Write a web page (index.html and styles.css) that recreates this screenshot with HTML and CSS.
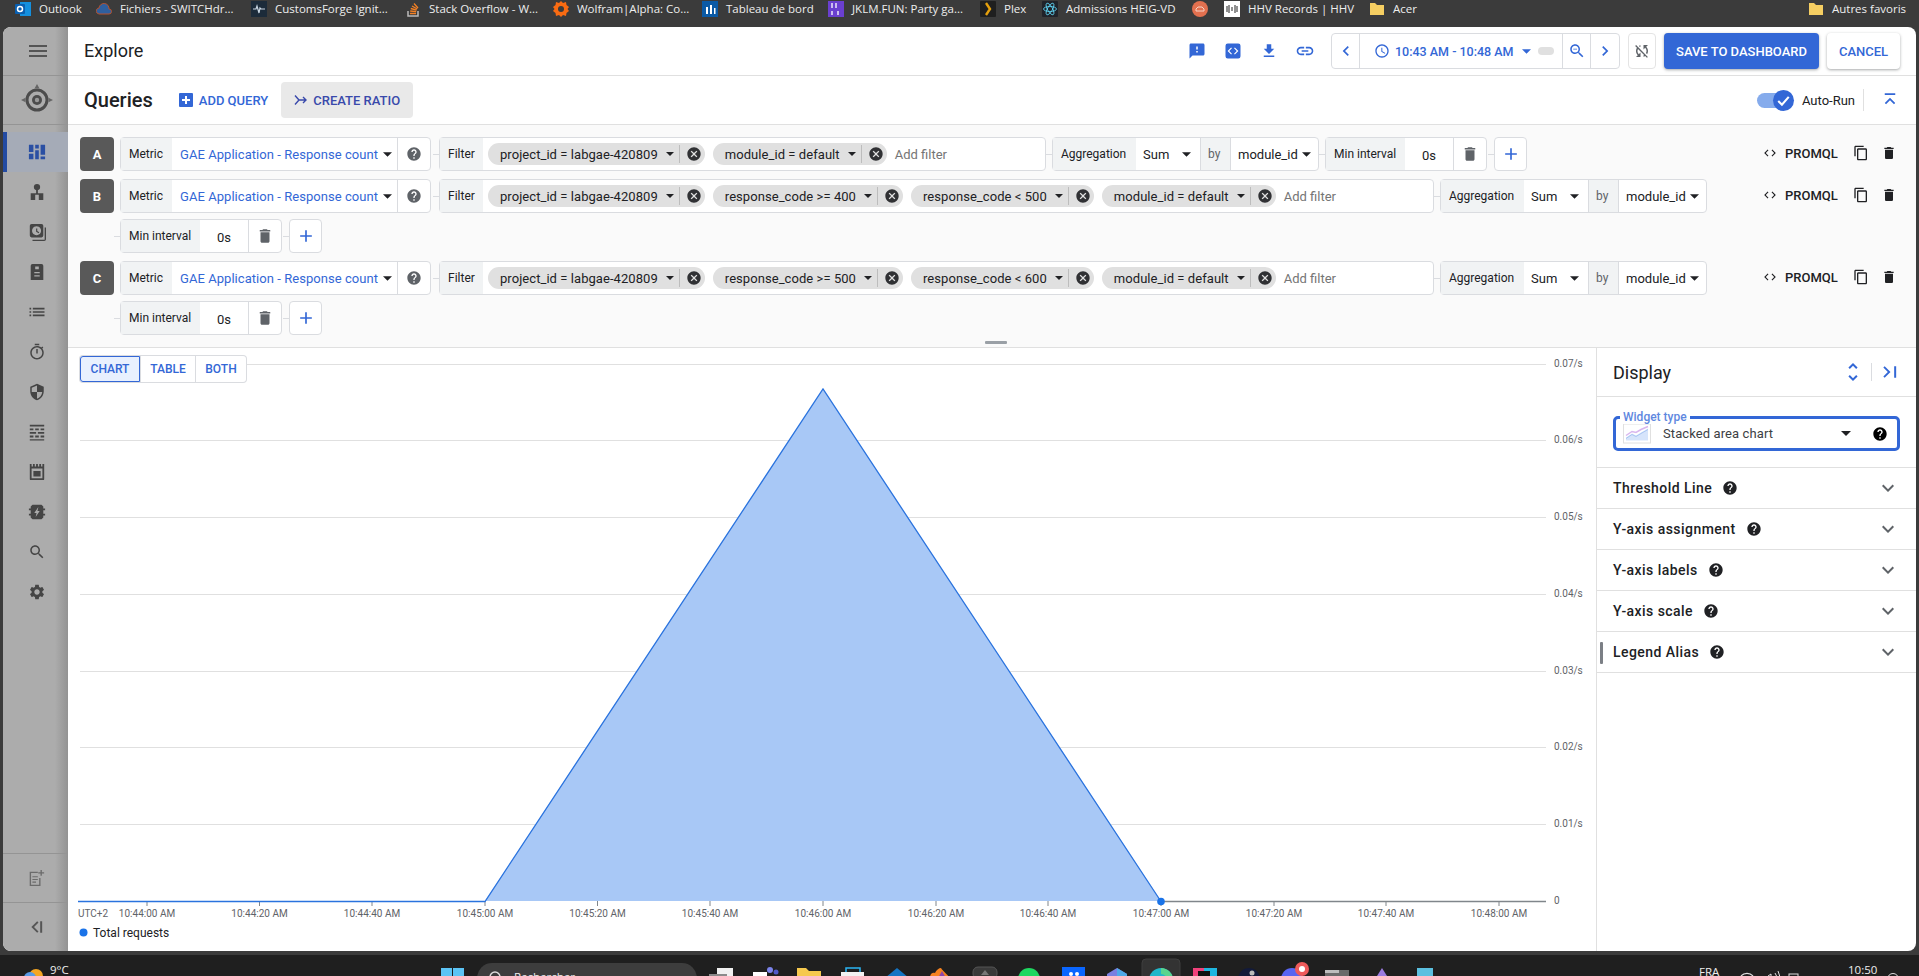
FILE: index.html
```html
<!DOCTYPE html>
<html lang="en">
<head>
<meta charset="utf-8">
<title>Explore</title>
<link rel="stylesheet" href="styles.css">
</head>
<body>
<svg class="sprite" aria-hidden="true">
  <symbol id="i-menu" viewBox="0 0 24 24"><path d="M3 18h18v-2H3v2zm0-5h18v-2H3v2zm0-7v2h18V6H3z"/></symbol>
  <symbol id="i-help" viewBox="0 0 24 24"><path d="M12 2C6.48 2 2 6.48 2 12s4.48 10 10 10 10-4.48 10-10S17.52 2 12 2zm1 17h-2v-2h2v2zm2.07-7.75l-.9.92C13.45 12.9 13 13.5 13 15h-2v-.5c0-1.1.45-2.1 1.17-2.83l1.24-1.26c.37-.36.59-.86.59-1.41 0-1.1-.9-2-2-2s-2 .9-2 2H8c0-2.21 1.79-4 4-4s4 1.79 4 4c0 .88-.36 1.68-.93 2.25z"/></symbol>
  <symbol id="i-cancel" viewBox="0 0 24 24"><path d="M12 2C6.47 2 2 6.47 2 12s4.47 10 10 10 10-4.47 10-10S17.53 2 12 2zm5 13.59L15.59 17 12 13.41 8.41 17 7 15.59 10.59 12 7 8.41 8.41 7 12 10.59 15.59 7 17 8.41 13.41 12 17 15.59z"/></symbol>
  <symbol id="i-delete" viewBox="0 0 24 24"><path d="M6 19c0 1.1.9 2 2 2h8c1.1 0 2-.9 2-2V7H6v12zM19 4h-3.5l-1-1h-5l-1 1H5v2h14V4z"/></symbol>
  <symbol id="i-add" viewBox="0 0 24 24"><path d="M19 13h-6v6h-2v-6H5v-2h6V5h2v6h6v2z"/></symbol>
  <symbol id="i-copy" viewBox="0 0 24 24"><path d="M16 1H4c-1.1 0-2 .9-2 2v14h2V3h12V1zm3 4H8c-1.1 0-2 .9-2 2v14c0 1.1.9 2 2 2h11c1.1 0 2-.9 2-2V7c0-1.1-.9-2-2-2zm0 16H8V7h11v14z"/></symbol>
  <symbol id="i-code" viewBox="0 0 24 24"><path d="M9.4 16.6L4.8 12l4.6-4.6L8 6l-6 6 6 6 1.4-1.4zm5.2 0l4.6-4.6-4.6-4.6L16 6l6 6-6 6-1.4-1.4z"/></symbol>
  <symbol id="i-feedback" viewBox="0 0 24 24"><path d="M20 2H4c-1.1 0-1.99.9-1.99 2L2 22l4-4h14c1.1 0 2-.9 2-2V4c0-1.1-.9-2-2-2zm-7 12h-2v-2h2v2zm0-4h-2V6h2v4z"/></symbol>
  <symbol id="i-codebox" viewBox="0 0 24 24"><path fill-rule="evenodd" d="M5 2h14a3 3 0 0 1 3 3v14a3 3 0 0 1-3 3H5a3 3 0 0 1-3-3V5a3 3 0 0 1 3-3zm5.6 13.6L7 12l3.600-3.600L9.500 7.300 4.800 12l4.700 4.700zm2.800 0l1.100 1.100 4.700-4.700-4.700-4.700-1.100 1.100L17 12z"/></symbol>
  <symbol id="i-download" viewBox="0 0 24 24"><path d="M19 9h-4V3H9v6H5l7 7 7-7zM5 18v2h14v-2H5z"/></symbol>
  <symbol id="i-link" viewBox="0 0 24 24"><path d="M3.900 12c0-1.710 1.390-3.100 3.100-3.100h4V7H7c-2.760 0-5 2.240-5 5s2.240 5 5 5h4v-1.900H7c-1.710 0-3.100-1.390-3.100-3.100zM8 13h8v-2H8v2zm9-6h-4v1.900h4c1.710 0 3.100 1.390 3.100 3.100s-1.390 3.100-3.100 3.100h-4V17h4c2.760 0 5-2.240 5-5s-2.240-5-5-5z"/></symbol>
  <symbol id="i-left" viewBox="0 0 24 24"><path d="M15.410 7.410L14 6l-6 6 6 6 1.410-1.410L10.830 12z"/></symbol>
  <symbol id="i-right" viewBox="0 0 24 24"><path d="M10 6L8.590 7.410 13.170 12l-4.580 4.590L10 18l6-6z"/></symbol>
  <symbol id="i-time" viewBox="0 0 24 24"><path d="M11.990 2C6.470 2 2 6.480 2 12s4.470 10 9.990 10C17.520 22 22 17.520 22 12S17.520 2 11.990 2zM12 20c-4.420 0-8-3.580-8-8s3.580-8 8-8 8 3.580 8 8-3.580 8-8 8zm.5-13H11v6l5.250 3.150.75-1.230-4.500-2.670z"/></symbol>
  <symbol id="i-search" viewBox="0 0 24 24"><path d="M15.500 14h-.79l-.28-.27C15.410 12.590 16 11.110 16 9.500 16 5.910 13.090 3 9.500 3S3 5.910 3 9.500 5.910 16 9.500 16c1.610 0 3.090-.59 4.230-1.570l.27.28v.79l5 4.990L20.490 19l-4.990-5zm-6 0C7.010 14 5 11.990 5 9.500S7.010 5 9.500 5 14 7.010 14 9.500 11.990 14 9.500 14z"/></symbol>
  <symbol id="i-zoomout" viewBox="0 0 24 24"><path d="M15.500 14h-.79l-.28-.27C15.410 12.590 16 11.110 16 9.500 16 5.910 13.090 3 9.500 3S3 5.910 3 9.500 5.910 16 9.500 16c1.610 0 3.090-.59 4.230-1.570l.27.28v.79l5 4.990L20.490 19l-4.990-5zm-6 0C7.010 14 5 11.990 5 9.500S7.010 5 9.500 5 14 7.010 14 9.500 11.990 14 9.500 14zM7 9h5v1H7z"/></symbol>
  <symbol id="i-sync" viewBox="0 0 24 24"><path d="M10 6.350V4.260c-.8.210-1.550.54-2.230.96l1.460 1.460c.25-.12.5-.24.77-.33zm-7.140-.94l2.360 2.360C4.450 8.990 4 10.440 4 12c0 2.210.91 4.200 2.360 5.640L4 20h6v-6l-2.240 2.240C6.680 15.150 6 13.660 6 12c0-1 .25-1.940.68-2.770l8.080 8.080c-.25.13-.5.25-.77.34v2.090c.8-.21 1.550-.54 2.230-.96l2.360 2.360 1.270-1.270L4.140 4.140 2.860 5.410zM20 4h-6v6l2.240-2.240C17.320 8.850 18 10.340 18 12c0 1-.25 1.940-.68 2.770l1.460 1.460C19.550 15.010 20 13.560 20 12c0-2.210-.91-4.200-2.360-5.640L20 4z"/></symbol>
  <symbol id="i-more" viewBox="0 0 24 24"><path d="M16.590 8.590L12 13.170 7.410 8.590 6 10l6 6 6-6z"/></symbol>
  <symbol id="i-unfold" viewBox="0 0 24 24"><path d="M12 5.830L15.170 9l1.410-1.410L12 3 7.410 7.590 8.830 9 12 5.830zm0 12.340L8.830 15l-1.410 1.410L12 21l4.590-4.590L15.170 15 12 18.170z"/></symbol>
  <symbol id="i-caret" viewBox="0 0 10 5"><path d="M0 0l5 5 5-5z"/></symbol>
  <symbol id="i-collapse" viewBox="0 0 24 24"><path d="M5 3h14v2.400H5zM12 9l-7 7 1.700 1.700 5.300-5.300 5.300 5.300L19 16z"/></symbol>
  <symbol id="i-panelin" viewBox="0 0 24 24"><path d="M5.600 5L4 6.600 9.400 12 4 17.400 5.600 19l7-7zM17 5h2.400v14H17z"/></symbol>
  <symbol id="i-panelout" viewBox="0 0 24 24"><path d="M15 6.600L13.400 5l-7 7 7 7 1.600-1.600L9.600 12zM17 5h2.400v14H17z"/></symbol>
  <symbol id="i-dash" viewBox="0 0 20 20"><path d="M1 2h5v8H1zM1 12h5v6H1zM8 2h4v4H8zM8 8h4v10H8zM14 2h5v11h-5zM14 15h5v3h-5z"/></symbol>
  <symbol id="i-hub" viewBox="0 0 20 20"><circle cx="10" cy="4.500" r="3.500"/><path d="M9 7h2v4.500h6V19h-5v-6h-4v6H3v-7.500h6z"/></symbol>
  <symbol id="i-hist" viewBox="0 0 20 20"><path fill-rule="evenodd" d="M4 1h11a2 2 0 0 1 2 2v11a2 2 0 0 1-2 2H4a2 2 0 0 1-2-2V3a2 2 0 0 1 2-2zm5.500 2.500a5 5 0 1 0 .01 0zM9 6h1.300v3l2.200 1.300-.6 1L9 9.700z"/><path d="M18.500 5H20v13a2 2 0 0 1-2 2H5v-1.500h13.500z"/></symbol>
  <symbol id="i-form" viewBox="0 0 20 20"><path fill-rule="evenodd" d="M5 1h10a2 2 0 0 1 2 2v16H3V3a2 2 0 0 1 2-2zm2 9v1.500h6V10zm0 3.500V15h6v-1.500zM8 4v3h4V4z"/></symbol>
  <symbol id="i-list" viewBox="0 0 24 24"><path d="M3 13h2v-2H3v2zm0 4h2v-2H3v2zm0-8h2V7H3v2zm4 4h14v-2H7v2zm0 4h14v-2H7v2zM7 7v2h14V7H7z"/></symbol>
  <symbol id="i-timer" viewBox="0 0 24 24"><path d="M15 1H9v2h6V1zm-4 13h2V8h-2v6zm8.030-6.610l1.420-1.420c-.43-.51-.9-.99-1.410-1.410l-1.420 1.420C16.070 4.740 14.120 4 12 4c-4.970 0-9 4.030-9 9s4.020 9 9 9 9-4.030 9-9c0-2.120-.74-4.070-1.970-5.610zM12 20c-3.870 0-7-3.130-7-7s3.130-7 7-7 7 3.130 7 7-3.130 7-7 7z"/></symbol>
  <symbol id="i-shield" viewBox="0 0 24 24"><path d="M12 1L3 5v6c0 5.550 3.840 10.740 9 12 5.160-1.260 9-6.450 9-12V5l-9-4zm0 10.990h7c-.53 4.120-3.280 7.790-7 8.940V12H5V6.300l7-3.110v8.800z"/></symbol>
  <symbol id="i-brick" viewBox="0 0 20 20"><path d="M2 2h16v2H2zM2 6h4v2H2zM8 6h4v2H8zM14 6h4v2h-4zM2 10h7v2H2zM11 10h7v2h-7zM2 14h4v2H2zM8 14h4v2H8zM14 14h4v2h-4zM2 18h16v1.500H2z"/></symbol>
  <symbol id="i-card" viewBox="0 0 20 20"><path fill-rule="evenodd" d="M2 1h2v3h1.500V1h2v3H9V1h2v3h1.500V1h2v3H16V1h2v17a1 1 0 0 1-1 1H3a1 1 0 0 1-1-1zm2 5v11h12V6zm2 3h8v6H6z"/></symbol>
  <symbol id="i-chip" viewBox="0 0 20 20"><path fill-rule="evenodd" d="M5 2h10l2 2v2h2v2h-2v4h2v2h-2v2l-2 2H5l-2-2v-2H1v-2h2V8H1V6h2V4zm6.500 2.500L7 11h2.500l-1 4.500L13 9h-2.500z"/></symbol>
  <symbol id="i-settings" viewBox="0 0 24 24"><path d="M19.140 12.940c.04-.3.06-.61.06-.94 0-.32-.02-.64-.07-.94l2.030-1.580c.18-.14.23-.41.12-.61l-1.920-3.320c-.12-.22-.37-.29-.59-.22l-2.390.96c-.5-.38-1.030-.7-1.620-.94l-.36-2.540c-.04-.24-.24-.41-.48-.41h-3.840c-.24 0-.43.17-.47.41l-.36 2.540c-.59.24-1.130.57-1.620.94l-2.390-.96c-.22-.08-.47 0-.59.22L2.740 8.870c-.12.21-.08.47.12.61l2.030 1.580c-.05.3-.09.63-.09.94s.02.64.07.94l-2.030 1.580c-.18.14-.23.41-.12.61l1.920 3.320c.12.22.37.29.59.22l2.390-.96c.5.38 1.030.7 1.620.94l.36 2.540c.05.24.24.41.48.41h3.840c.24 0 .44-.17.47-.41l.36-2.540c.59-.24 1.130-.56 1.620-.94l2.390.96c.22.08.47 0 .59-.22l1.920-3.320c.12-.22.07-.47-.12-.61l-2.010-1.580zM12 15.600c-1.980 0-3.600-1.620-3.600-3.600s1.620-3.600 3.600-3.600 3.600 1.620 3.600 3.600-1.620 3.600-3.600 3.600z"/></symbol>
  <symbol id="i-note" viewBox="0 0 20 20"><path fill-rule="evenodd" d="M3 3h9v1.500H4.500v13h9V10H15v9H3zM6 8h6v1.300H6zM6 11h6v1.300H6zM6 14h4v1.300H6zM15 1h1.500v2.500H19V5h-2.500v2.500H15V5h-2.500V3.500H15z"/></symbol>
</svg>

<header class="bookmarks">
  <div class="bm"><svg class="bm-icon" viewBox="0 0 16 16"><rect x="5" y="1" width="11" height="14" fill="#1490df"/><rect y="3" width="10" height="10" rx="1" fill="#0a5fb0"/><circle cx="5" cy="8" r="2.500" fill="none" stroke="#fff" stroke-width="1.500"/></svg><span>Outlook</span></div>
  <div class="bm"><svg class="bm-icon" viewBox="0 0 16 16"><path d="M1 12a3 3 0 0 1 2-5 5 5 0 0 1 10 1 2.500 2.500 0 0 1 0 5H3z" fill="#2f5f9e" stroke="#b7532e"/></svg><span>Fichiers - SWITCHdr...</span></div>
  <div class="bm"><svg class="bm-icon" viewBox="0 0 16 16"><rect width="16" height="16" fill="#1c2b3a"/><path d="M2 8h3l1-3 2 7 1-5 1 1h4" fill="none" stroke="#c9d6e2" stroke-width="1.200"/></svg><span>CustomsForge Ignit...</span></div>
  <div class="bm"><svg class="bm-icon" viewBox="0 0 16 16"><path d="M3 10v5h10v-5" fill="none" stroke="#bcbbbb" stroke-width="1.500"/><path d="M5 12.500h6M5.200 10l6 .6M5.800 7.500l5.800 1.600M7 5l5.200 3M9 2.500l4 4.500" stroke="#f48024" stroke-width="1.300"/></svg><span>Stack Overflow - W...</span></div>
  <div class="bm"><svg class="bm-icon" viewBox="0 0 16 16"><path d="M8 0l2 2 3-1 .5 3 2.500 2-1.500 2 1.500 2-2.500 2-.5 3-3-1-2 2-2-2-3 1-.5-3L0 10l1.500-2L0 6l2.500-2L3 1l3 1z" fill="#f96b12"/><circle cx="8" cy="8" r="3" fill="#3b3b3b"/></svg><span>Wolfram|Alpha: Co...</span></div>
  <div class="bm"><svg class="bm-icon" viewBox="0 0 16 16"><rect width="16" height="16" fill="#0b5aa5"/><path d="M4 13V6h2v7zm4 0V4h2v9zm4 0V7h1.500v6z" fill="#fff"/></svg><span>Tableau de bord</span></div>
  <div class="bm"><svg class="bm-icon" viewBox="0 0 16 16"><rect width="16" height="16" fill="#6a3fd0"/><path d="M4 2v5M8 2v5M4 10v4M10 10v4" stroke="#fff" stroke-width="1.300"/></svg><span>JKLM.FUN: Party ga...</span></div>
  <div class="bm"><svg class="bm-icon" viewBox="0 0 16 16"><rect width="16" height="16" rx="1" fill="#1f1f1f"/><path d="M6 2l4 6-4 6" fill="none" stroke="#e5a00d" stroke-width="2.400"/></svg><span>Plex</span></div>
  <div class="bm"><svg class="bm-icon" viewBox="0 0 16 16"><rect width="16" height="16" rx="1" fill="#20232a"/><g fill="none" stroke="#61dafb" stroke-width=".8"><ellipse cx="8" cy="8" rx="6.500" ry="2.500"/><ellipse cx="8" cy="8" rx="6.500" ry="2.500" transform="rotate(60 8 8)"/><ellipse cx="8" cy="8" rx="6.500" ry="2.500" transform="rotate(120 8 8)"/></g></svg><span>Admissions HEIG-VD</span></div>
  <div class="bm"><svg class="bm-icon" viewBox="0 0 16 16"><circle cx="8" cy="8" r="8" fill="#e2704f"/><path d="M4 10h8V8l-2-2H6L4 8z" fill="none" stroke="#f6d3c7"/></svg></div>
  <div class="bm"><svg class="bm-icon" viewBox="0 0 16 16"><rect width="16" height="16" fill="#fff"/><path d="M3 5v6M5 4v8M8 6v4M11 4v8M13 5v6" stroke="#222" stroke-width="1"/></svg><span>HHV Records | HHV</span></div>
  <div class="bm"><svg class="bm-icon" viewBox="0 0 16 16"><path d="M1 2h5l2 2h7v10H1z" fill="#f5ce62"/></svg><span>Acer</span></div>
  <div class="bm bm-other"><svg class="bm-icon" viewBox="0 0 16 16"><path d="M1 2h5l2 2h7v10H1z" fill="#f5ce62"/></svg><span>Autres favoris</span></div>
</header>

<div class="window">
  <nav class="sidebar">
    <div class="side-cell side-menu"><svg class="ic ic-24"><use href="#i-menu"/></svg></div>
    <div class="side-cell side-logo">
      <svg class="logo" viewBox="0 0 36 36"><circle cx="18" cy="18" r="10" fill="none" stroke="#4c4c4c" stroke-width="3"/><circle cx="18" cy="18" r="5" fill="#4c4c4c"/><circle cx="18" cy="18" r="2.200" fill="#999"/><path d="M18 2l2.500 4.500h-5zM2 18l4.500-2.200v4.400zM34 18l-4.500-2.200v4.400z" fill="#666"/></svg>
    </div>
    <ul class="side-nav">
      <li class="side-item active"><svg class="ic ic-18"><use href="#i-dash"/></svg></li>
      <li class="side-item"><svg class="ic ic-18"><use href="#i-hub"/></svg></li>
      <li class="side-item"><svg class="ic ic-18"><use href="#i-hist"/></svg></li>
      <li class="side-item"><svg class="ic ic-18"><use href="#i-form"/></svg></li>
      <li class="side-item"><svg class="ic ic-20"><use href="#i-list"/></svg></li>
      <li class="side-item"><svg class="ic ic-18"><use href="#i-timer"/></svg></li>
      <li class="side-item"><svg class="ic ic-18"><use href="#i-shield"/></svg></li>
      <li class="side-item"><svg class="ic ic-18"><use href="#i-brick"/></svg></li>
      <li class="side-item"><svg class="ic ic-18"><use href="#i-card"/></svg></li>
      <li class="side-item"><svg class="ic ic-18"><use href="#i-chip"/></svg></li>
      <li class="side-item"><svg class="ic ic-18"><use href="#i-search"/></svg></li>
      <li class="side-item"><svg class="ic ic-18"><use href="#i-settings"/></svg></li>
    </ul>
    <div class="side-cell side-bottom side-note"><svg class="ic ic-18"><use href="#i-note"/></svg></div>
    <div class="side-cell side-bottom"><svg class="ic ic-20"><use href="#i-panelout"/></svg></div>
  </nav>

  <main class="main">
    <div class="topbar">
      <h1 class="page-title">Explore</h1>
      <div class="toolbar">
        <span class="tool"><svg class="ic ic-18"><use href="#i-feedback"/></svg></span>
        <span class="tool"><svg class="ic ic-18"><use href="#i-codebox"/></svg></span>
        <span class="tool"><svg class="ic ic-18"><use href="#i-download"/></svg></span>
        <span class="tool"><svg class="ic ic-20"><use href="#i-link"/></svg></span>
        <div class="timegroup">
          <span class="tg-btn"><svg class="ic ic-20"><use href="#i-left"/></svg></span>
          <span class="tg-range">
            <svg class="ic ic-16"><use href="#i-time"/></svg>
            <span class="tg-text">10:43 AM - 10:48 AM</span>
            <svg class="caret"><use href="#i-caret"/></svg>
            <span class="tg-pill"></span>
          </span>
          <span class="tg-btn"><svg class="ic ic-18"><use href="#i-zoomout"/></svg></span>
          <span class="tg-btn tg-last"><svg class="ic ic-20"><use href="#i-right"/></svg></span>
        </div>
        <span class="sync-btn"><svg class="ic ic-18"><use href="#i-sync"/></svg></span>
        <button class="btn-save">SAVE TO DASHBOARD</button>
        <button class="btn-cancel">CANCEL</button>
      </div>
    </div>

    <div class="query-head">
      <h2 class="query-title">Queries</h2>
      <span class="add-query"><svg class="add-box" viewBox="0 0 14 14"><rect width="14" height="14" rx="1" fill="#3367d6"/><path d="M6 3h2v3h3v2H8v3H6V8H3V6h3z" fill="#fff"/></svg>ADD QUERY</span>
      <span class="create-ratio"><svg class="ratio-icon" viewBox="0 0 14 12"><path d="M1 1.500L5 6h7M9 3l3 3-3 3M1 10.500L5 6" fill="none" stroke="#3949ab" stroke-width="1.400"/></svg>CREATE RATIO</span>
      <div class="auto-run">
        <span class="toggle"><span class="toggle-knob"><svg viewBox="0 0 20 20"><path d="M5 10.500l3.500 3.500L15 6.500" fill="none" stroke="#fff" stroke-width="2"/></svg></span></span>
        <span class="auto-label">Auto-Run</span>
        <span class="auto-sep"></span>
        <svg class="ic ic-18 blue"><use href="#i-collapse"/></svg>
      </div>
    </div>

    <section class="query-panel">
      <div class="query">
        <div class="letter">A</div>
        <div class="fields">
          <div class="box box-first metric"><span class="label">Metric</span><span class="metric-value">GAE Application - Response count<svg class="caret dark"><use href="#i-caret"/></svg></span><span class="help-cell"><svg class="ic ic-16 grey"><use href="#i-help"/></svg></span></div>
          <div class="box filter filter-short"><span class="label">Filter</span><span class="chips">
            <span class="chip">project_id = labgae-420809<svg class="caret chip-caret"><use href="#i-caret"/></svg><i class="chip-sep"></i><svg class="ic chip-x"><use href="#i-cancel"/></svg></span>
            <span class="chip">module_id = default<svg class="caret chip-caret"><use href="#i-caret"/></svg><i class="chip-sep"></i><svg class="ic chip-x"><use href="#i-cancel"/></svg></span>
            <span class="add-filter">Add filter</span></span></div>
          <div class="box agg"><span class="label">Aggregation</span><span class="val val-sum">Sum<svg class="caret dark"><use href="#i-caret"/></svg></span><span class="label label-by">by</span><span class="val val-mod">module_id<svg class="caret dark"><use href="#i-caret"/></svg></span></div>
          <div class="min-group"><div class="box mini"><span class="label">Min interval</span><span class="zero">0s</span><span class="trash"><svg class="ic ic-18 grey"><use href="#i-delete"/></svg></span></div><div class="box plus"><svg class="ic ic-20 blue"><use href="#i-add"/></svg></div></div>
        </div>
        <div class="actions"><svg class="ic ic-14"><use href="#i-code"/></svg><span class="promql">PROMQL</span><svg class="ic ic-16 act-copy"><use href="#i-copy"/></svg><svg class="ic ic-16 act-del"><use href="#i-delete"/></svg></div>
      </div>

      <div class="query">
        <div class="letter">B</div>
        <div class="fields">
          <div class="box box-first metric"><span class="label">Metric</span><span class="metric-value">GAE Application - Response count<svg class="caret dark"><use href="#i-caret"/></svg></span><span class="help-cell"><svg class="ic ic-16 grey"><use href="#i-help"/></svg></span></div>
          <div class="box filter filter-long"><span class="label">Filter</span><span class="chips">
            <span class="chip">project_id = labgae-420809<svg class="caret chip-caret"><use href="#i-caret"/></svg><i class="chip-sep"></i><svg class="ic chip-x"><use href="#i-cancel"/></svg></span>
            <span class="chip">response_code &gt;= 400<svg class="caret chip-caret"><use href="#i-caret"/></svg><i class="chip-sep"></i><svg class="ic chip-x"><use href="#i-cancel"/></svg></span>
            <span class="chip">response_code &lt; 500<svg class="caret chip-caret"><use href="#i-caret"/></svg><i class="chip-sep"></i><svg class="ic chip-x"><use href="#i-cancel"/></svg></span>
            <span class="chip">module_id = default<svg class="caret chip-caret"><use href="#i-caret"/></svg><i class="chip-sep"></i><svg class="ic chip-x"><use href="#i-cancel"/></svg></span>
            <span class="add-filter">Add filter</span></span></div>
          <div class="box agg"><span class="label">Aggregation</span><span class="val val-sum">Sum<svg class="caret dark"><use href="#i-caret"/></svg></span><span class="label label-by">by</span><span class="val val-mod">module_id<svg class="caret dark"><use href="#i-caret"/></svg></span></div>
          <div class="min-group"><div class="box mini"><span class="label">Min interval</span><span class="zero">0s</span><span class="trash"><svg class="ic ic-18 grey"><use href="#i-delete"/></svg></span></div><div class="box plus"><svg class="ic ic-20 blue"><use href="#i-add"/></svg></div></div>
        </div>
        <div class="actions"><svg class="ic ic-14"><use href="#i-code"/></svg><span class="promql">PROMQL</span><svg class="ic ic-16 act-copy"><use href="#i-copy"/></svg><svg class="ic ic-16 act-del"><use href="#i-delete"/></svg></div>
      </div>

      <div class="query">
        <div class="letter">C</div>
        <div class="fields">
          <div class="box box-first metric"><span class="label">Metric</span><span class="metric-value">GAE Application - Response count<svg class="caret dark"><use href="#i-caret"/></svg></span><span class="help-cell"><svg class="ic ic-16 grey"><use href="#i-help"/></svg></span></div>
          <div class="box filter filter-long"><span class="label">Filter</span><span class="chips">
            <span class="chip">project_id = labgae-420809<svg class="caret chip-caret"><use href="#i-caret"/></svg><i class="chip-sep"></i><svg class="ic chip-x"><use href="#i-cancel"/></svg></span>
            <span class="chip">response_code &gt;= 500<svg class="caret chip-caret"><use href="#i-caret"/></svg><i class="chip-sep"></i><svg class="ic chip-x"><use href="#i-cancel"/></svg></span>
            <span class="chip">response_code &lt; 600<svg class="caret chip-caret"><use href="#i-caret"/></svg><i class="chip-sep"></i><svg class="ic chip-x"><use href="#i-cancel"/></svg></span>
            <span class="chip">module_id = default<svg class="caret chip-caret"><use href="#i-caret"/></svg><i class="chip-sep"></i><svg class="ic chip-x"><use href="#i-cancel"/></svg></span>
            <span class="add-filter">Add filter</span></span></div>
          <div class="box agg"><span class="label">Aggregation</span><span class="val val-sum">Sum<svg class="caret dark"><use href="#i-caret"/></svg></span><span class="label label-by">by</span><span class="val val-mod">module_id<svg class="caret dark"><use href="#i-caret"/></svg></span></div>
          <div class="min-group"><div class="box mini"><span class="label">Min interval</span><span class="zero">0s</span><span class="trash"><svg class="ic ic-18 grey"><use href="#i-delete"/></svg></span></div><div class="box plus"><svg class="ic ic-20 blue"><use href="#i-add"/></svg></div></div>
        </div>
        <div class="actions"><svg class="ic ic-14"><use href="#i-code"/></svg><span class="promql">PROMQL</span><svg class="ic ic-16 act-copy"><use href="#i-copy"/></svg><svg class="ic ic-16 act-del"><use href="#i-delete"/></svg></div>
      </div>
      <span class="drag-handle"></span>
    </section>

    <div class="work">
      <section class="chart">
        <div class="tabs"><span class="tab tab-on">CHART</span><span class="tab">TABLE</span><span class="tab">BOTH</span></div>
        <svg class="plot" viewBox="68 348 1528 603" preserveAspectRatio="none">
          <g class="grid">
            <path d="M80 364.500H1546M80 440.500H1546M80 517.500H1546M80 594.500H1546M80 671.500H1546M80 747.500H1546M80 824.500H1546"/>
          </g>
          <g class="ticks">
            <path d="M147 901v5M259.500 901v5M372 901v5M485 901v5M597.500 901v5M710 901v5M823 901v5M936 901v5M1048 901v5M1161 901v5M1274 901v5M1386 901v5M1499 901v5"/>
          </g>
          <polygon class="area" points="485,901 823,389 1161,901"/>
          <path class="baseline" d="M1161 901.500H1546"/>
          <path class="series" d="M78 901.500H485L823 389L1161 901.500"/>
          <circle class="end-dot" cx="1161" cy="901.500" r="3.800"/>
          <g class="y-labels">
            <text x="1554" y="367">0.07/s</text>
            <text x="1554" y="443">0.06/s</text>
            <text x="1554" y="520">0.05/s</text>
            <text x="1554" y="597">0.04/s</text>
            <text x="1554" y="674">0.03/s</text>
            <text x="1554" y="750">0.02/s</text>
            <text x="1554" y="827">0.01/s</text>
            <text x="1554" y="904">0</text>
          </g>
          <g class="x-labels">
            <text class="utc" x="78" y="917">UTC+2</text>
            <text x="147" y="917">10:44:00 AM</text>
            <text x="259.500" y="917">10:44:20 AM</text>
            <text x="372" y="917">10:44:40 AM</text>
            <text x="485" y="917">10:45:00 AM</text>
            <text x="597.500" y="917">10:45:20 AM</text>
            <text x="710" y="917">10:45:40 AM</text>
            <text x="823" y="917">10:46:00 AM</text>
            <text x="936" y="917">10:46:20 AM</text>
            <text x="1048" y="917">10:46:40 AM</text>
            <text x="1161" y="917">10:47:00 AM</text>
            <text x="1274" y="917">10:47:20 AM</text>
            <text x="1386" y="917">10:47:40 AM</text>
            <text x="1499" y="917">10:48:00 AM</text>
          </g>
          <circle class="legend-dot" cx="83.500" cy="932.500" r="4"/>
          <text class="legend" x="93" y="937">Total requests</text>
        </svg>
      </section>

      <aside class="display">
        <div class="display-head">
          <span class="display-title">Display</span>
          <svg class="ic ic-24 blue"><use href="#i-unfold"/></svg>
          <span class="display-sep"></span>
          <svg class="ic ic-20 blue"><use href="#i-panelin"/></svg>
        </div>
        <div class="widget-wrap">
          <div class="widget">
            <span class="widget-label">Widget type</span>
            <svg class="thumb" viewBox="0 0 28 20"><rect x=".5" y=".5" width="27" height="19" fill="#fff" stroke="#e0e0e0"/><path d="M3 14l6-4 4 2 5-3 7-4v12H3z" fill="#d6e4fb"/><path d="M3 12l6-4 4 1 5-3 7-3" fill="none" stroke="#d9b6ee" stroke-width="1.500"/><path d="M3 15l6-4 4 2 5-3 7-4" fill="none" stroke="#a9c5f2"/></svg>
            <span class="widget-text">Stacked area chart</span>
            <svg class="caret dark widget-caret"><use href="#i-caret"/></svg>
            <svg class="ic ic-16 widget-help"><use href="#i-help"/></svg>
          </div>
        </div>
        <div class="option"><span>Threshold Line</span><svg class="ic ic-16"><use href="#i-help"/></svg><svg class="ic ic-24 chev"><use href="#i-more"/></svg></div>
        <div class="option"><span>Y-axis assignment</span><svg class="ic ic-16"><use href="#i-help"/></svg><svg class="ic ic-24 chev"><use href="#i-more"/></svg></div>
        <div class="option"><span>Y-axis labels</span><svg class="ic ic-16"><use href="#i-help"/></svg><svg class="ic ic-24 chev"><use href="#i-more"/></svg></div>
        <div class="option"><span>Y-axis scale</span><svg class="ic ic-16"><use href="#i-help"/></svg><svg class="ic ic-24 chev"><use href="#i-more"/></svg></div>
        <div class="option option-mark"><span>Legend Alias</span><svg class="ic ic-16"><use href="#i-help"/></svg><svg class="ic ic-24 chev"><use href="#i-more"/></svg></div>
      </aside>
    </div>
  </main>
</div>

<footer class="taskbar">
  <svg class="task-svg" viewBox="0 955 1919 21">
    <circle cx="36" cy="976" r="7" fill="#f5a623"/><circle cx="30" cy="978" r="6" fill="#5a9be6"/>
    <text class="tb-text" x="50" y="974">9°C</text>
    <path d="M441 968h11v8h-11zM453 968h11v8h-11z" fill="#5cc4f5"/>
    <rect x="477" y="963" width="220" height="30" rx="15" fill="#3d3d3d"/>
    <circle cx="495" cy="977" r="5" fill="none" stroke="#ddd" stroke-width="1.500"/>
    <text class="tb-text" x="514" y="981">Rechercher</text>
    <rect x="717" y="968" width="16" height="10" fill="#f0f0f0"/><rect x="709" y="974" width="18" height="4" fill="#8a8a8a"/>
    <rect x="753" y="972" width="14" height="6" fill="#fff"/><circle cx="770" cy="970" r="3" fill="#7b83eb"/><circle cx="776" cy="972" r="2.500" fill="#5059c9"/>
    <path d="M797 968h9l3 3h12v7h-24z" fill="#f6c94e"/>
    <path d="M846 972v-4h14v4" fill="none" stroke="#2bb5f3" stroke-width="1.500"/><rect x="841" y="972" width="23" height="6" fill="#f2f2f2"/>
    <path d="M885 978l12-10 12 10z" fill="#1475c4"/>
    <path d="M930 978c0-5 3-6 5-5 1-3 4-5 6-5 1 2 5 5 9 10z" fill="#f58220"/><path d="M938 978l4-7 4 7z" fill="#8e44ad"/>
    <rect x="973" y="967" width="24" height="12" rx="5" fill="#3a3a3a" stroke="#555"/><path d="M985 970l-4 5h8z" fill="#777"/>
    <circle cx="1029" cy="979" r="11" fill="#1ed760"/>
    <rect x="1062" y="967" width="23" height="12" fill="#0a66ff"/><circle cx="1071" cy="974" r="2" fill="#fff"/><circle cx="1077" cy="974" r="2" fill="#fff"/>
    <path d="M1117 968l10 6v4h-20v-4z" fill="#7a7fe0"/><path d="M1117 968l10 6v4h-10z" fill="#4fa9e8"/>
    <rect x="1142" y="959" width="38" height="30" rx="4" fill="#333" stroke="#3f3f3f"/>
    <circle cx="1161" cy="980" r="12" fill="#1fb6c9"/><path d="M1161 968a12 12 0 0 1 12 12h-6a6 6 0 0 0-6-6z" fill="#58d48f"/>
    <rect x="1193" y="968" width="24" height="10" fill="#f0417b"/><rect x="1204" y="968" width="13" height="10" fill="#1fb6e0"/><rect x="1198" y="971" width="12" height="7" fill="#111"/>
    <circle cx="1249" cy="979" r="11" fill="#121a3a"/><circle cx="1252" cy="973" r="2.500" fill="#bbb"/>
    <circle cx="1292" cy="979" r="11" fill="#5865f2"/><circle cx="1302" cy="969" r="7" fill="#ee5a5a"/><circle cx="1302" cy="969" r="3" fill="#fff"/>
    <rect x="1325" y="970" width="24" height="8" fill="#6a6a6a"/><rect x="1325" y="970" width="14" height="3" fill="#bdbdbd"/>
    <path d="M1382 968l5 8v2h-10v-2z" fill="#9b7be0"/>
    <rect x="1417" y="968" width="16" height="10" fill="#5bc0e0"/>
    <text class="tb-text" x="1699" y="976">FRA</text>
    <path d="M1741 976a8 8 0 0 1 12 0" fill="none" stroke="#ddd" stroke-width="1.200"/>
    <path d="M1768 976l3-2v4M1775 973l2 4M1778 971l2 6" fill="none" stroke="#ddd"/>
    <rect x="1789" y="974" width="9" height="5" fill="none" stroke="#ddd"/>
    <text class="tb-text" x="1848" y="974">10:50</text>
    <circle cx="1893" cy="979" r="5.500" fill="none" stroke="#ddd"/>
  </svg>
</footer>
</body>
</html>
```

FILE: styles.css
```css
* { box-sizing: border-box; }
html, body { margin: 0; height: 100%; }
body {
  width: 1919px;
  height: 976px;
  overflow: hidden;
  display: flex;
  flex-direction: column;
  background: #3b3b3b;
  font-family: Roboto, "Liberation Sans", sans-serif;
  color: #202124;
}
h1, h2, ul { margin: 0; padding: 0; font-weight: 400; }
ul { list-style: none; }
button { font-family: inherit; cursor: pointer; }
.sprite { position: absolute; width: 0; height: 0; }

.ic { display: block; fill: currentColor; flex: none; }
.ic-14 { width: 14px; height: 14px; }
.ic-16 { width: 16px; height: 16px; }
.ic-18 { width: 18px; height: 18px; }
.ic-20 { width: 20px; height: 20px; }
.ic-24 { width: 24px; height: 24px; }
.blue { color: #3367d6; }
.grey { color: #5f6368; }
.caret { display: block; flex: none; width: 9px; height: 5px; fill: currentColor; }
.dark { color: #202124; }

/* bookmarks */
.bookmarks {
  flex: none;
  height: 27px;
  padding-left: 15px;
  display: grid;
  grid-template-columns: 81px 155px 154px 148px 149px 126px 152px 62px 150px 32px 145px 439px 100px;
  align-items: start;
  color: #eeeeee;
  font-family: "Open Sans", Roboto, sans-serif;
  font-size: 11.5px;
}
.bm { display: flex; align-items: center; gap: 8px; height: 17px; white-space: nowrap; }
.bm-icon { width: 16px; height: 16px; flex: none; }

/* window */
.window {
  flex: none;
  width: 1913px;
  height: 924px;
  margin-left: 3px;
  display: flex;
  overflow: hidden;
  border-radius: 8px;
  background: #fff;
}

/* sidebar */
.sidebar {
  flex: none;
  width: 65px;
  display: flex;
  flex-direction: column;
  color: #454545;
  background: linear-gradient(90deg, #acacac 0, #acacac 80%, #939393 100%);
}
.side-cell { flex: none; display: flex; align-items: center; justify-content: center; }
.side-menu { height: 49px; padding-left: 5px; color: #555; border-bottom: 1px solid #949494; }
.side-logo { height: 49px; padding-left: 2px; border-bottom: 1px solid #949494; }
.logo { width: 36px; height: 36px; }
.side-nav { margin-top: 7px; }
.side-item { height: 40px; display: flex; align-items: center; justify-content: center; padding-left: 3px; }
.side-item.active {
  color: #2a4fa3;
  background: #a5abb7;
  box-shadow: inset 4px 0 0 #234ba3;
}
.side-bottom { height: 49px; padding-left: 1px; color: #555; border-top: 1px solid #949494; }
.side-note { margin-top: auto; color: #6b6b6b; }

/* main */
.main { flex: 1; min-width: 0; display: flex; flex-direction: column; }
.topbar {
  flex: none;
  height: 49px;
  padding: 0 16px;
  display: flex;
  align-items: center;
  border-bottom: 1px solid #e0e0e0;
}
.page-title { font-size: 18px; line-height: 24px; }
.toolbar { margin-left: auto; display: flex; align-items: center; color: #3367d6; }
.tool { width: 36px; height: 36px; display: flex; align-items: center; justify-content: center; }
.timegroup {
  margin-left: 8px;
  width: 289px;
  height: 36px;
  display: flex;
  border: 1px solid #dadce0;
  border-radius: 4px;
}
.tg-btn { width: 28px; display: flex; align-items: center; justify-content: center; border-right: 1px solid #dadce0; }
.tg-last { border-right: 0; }
.tg-range { flex: 1; display: flex; align-items: center; padding-left: 14px; border-right: 1px solid #dadce0; }
.tg-text { margin-left: 5px; font-size: 12.5px; font-weight: 500; white-space: nowrap; }
.tg-range .caret { margin-left: 8px; }
.tg-pill { width: 16px; height: 8px; margin-left: 7px; border-radius: 4px; background: #e0e0e0; }
.sync-btn {
  margin-left: 8px;
  width: 28px;
  height: 36px;
  display: flex;
  align-items: center;
  justify-content: center;
  color: #5f6368;
  border: 1px solid #e4e4e4;
  border-radius: 4px;
}
.btn-save, .btn-cancel {
  height: 36px;
  padding: 0;
  border: 0;
  border-radius: 4px;
  font-size: 13px;
  font-weight: 500;
  box-shadow: 0 1px 3px rgba(60, 64, 67, .45);
}
.btn-save { margin-left: 8px; width: 155px; color: #fff; background: #3367d6; }
.btn-cancel { margin-left: 8px; width: 73px; color: #3367d6; background: #fff; }

.query-head {
  flex: none;
  height: 49px;
  padding: 0 16px;
  display: flex;
  align-items: center;
  border-bottom: 1px solid #e0e0e0;
}
.query-title { font-size: 20px; font-weight: 500; line-height: 24px; color: #202124; }
.add-query, .create-ratio { display: flex; align-items: center; font-size: 13px; font-weight: 500; white-space: nowrap; }
.add-query { margin-left: 26px; color: #3367d6; }
.add-box { width: 14px; height: 14px; margin-right: 6px; }
.create-ratio {
  margin-left: 13px;
  width: 132px;
  height: 36px;
  padding-left: 13px;
  color: #3949ab;
  background: #e9e9e9;
  border-radius: 4px;
}
.ratio-icon { width: 14px; height: 12px; margin-right: 5px; }
.auto-run { margin-left: auto; margin-right: 1px; display: flex; align-items: center; }
.toggle { position: relative; width: 36px; height: 15px; border-radius: 8px; background: #85abec; }
.toggle-knob {
  position: absolute;
  right: -1px;
  top: -3px;
  width: 21px;
  height: 21px;
  border-radius: 50%;
  background: #3367d6;
}
.toggle-knob svg { display: block; width: 21px; height: 21px; }
.auto-label { margin-left: 9px; font-size: 13px; }
.auto-sep { width: 1px; height: 22px; margin: 0 17px 0 8px; background: #e0e0e0; }

/* query panel */
.query-panel {
  flex: none;
  position: relative;
  height: 223px;
  padding: 12px 12px 0;
  background: #fafafa;
  border-bottom: 1px solid #e0e0e0;
}
.query { display: flex; margin-bottom: 8px; }
.letter {
  flex: none;
  width: 34px;
  height: 34px;
  margin-right: 6px;
  display: flex;
  align-items: center;
  justify-content: center;
  color: #fff;
  font-size: 13px;
  font-weight: 700;
  background: #595959;
  border-radius: 4px;
}
.fields { width: 1636px; flex: none; display: flex; flex-wrap: wrap; gap: 6px; align-items: flex-start; }
.box {
  position: relative;
  flex: none;
  height: 34px;
  display: flex;
  align-items: stretch;
  background: #fff;
  border: 1px solid #dadce0;
  border-radius: 4px;
  font-size: 13px;
}
.box::before {
  content: "";
  position: absolute;
  left: -7px;
  top: 16px;
  width: 6px;
  height: 1px;
  background: #dadce0;
}
.box-first::before { display: none; }
.label {
  flex: none;
  display: flex;
  align-items: center;
  padding: 0 8px;
  font-size: 12px;
  font-weight: 400;
  color: #202124;
  white-space: nowrap;
  background: #f1f3f4;
}
.metric { width: 311px; }
.metric .label { width: 51px; }
.metric-value {
  flex: 1;
  display: flex;
  align-items: center;
  padding-left: 8px;
  letter-spacing: .05px;
  color: #3367d6;
  white-space: nowrap;
}
.metric-value .caret { margin-left: 5px; }
.help-cell { width: 33px; display: flex; align-items: center; justify-content: center; border-left: 1px solid #dadce0; }
.filter { margin-left: 2px; }
.filter-short { width: 607px; }
.filter-long { width: 995px; }
.filter .label { width: 43px; }
.chips { flex: 1; display: flex; align-items: center; gap: 8px; padding-left: 5px; }
.chip {
  height: 22px;
  display: flex;
  align-items: center;
  padding: 0 4px 0 12px;
  border-radius: 11px;
  background: #e0e0e0;
  letter-spacing: .06px;
  white-space: nowrap;
}
.chip-caret { width: 8px; height: 4px; margin-left: 8px; }
.chip-sep { width: 1px; height: 18px; margin: 0 6px 0 5px; background: #bdbdbd; }
.chip-x { width: 16px; height: 16px; color: #303134; margin-right: -1px; }
.add-filter { color: #757575; }
.agg { width: 267px; }
.agg .label:first-child { width: 83px; }
.val { display: flex; align-items: center; justify-content: space-between; padding: 0 7px; }
.val-sum { width: 64px; padding-right: 9px; }
.label-by { width: 31px; padding: 0 7px; color: #5f6368; border-left: 1px solid #dadce0; border-right: 1px solid #dadce0; }
.val-mod { flex: 1; }
.min-group { display: flex; gap: 7px; }
.mini { width: 162px; }
.mini .label { width: 79px; }
.zero { flex: 1; display: flex; align-items: center; justify-content: center; padding-top: 2px; }
.trash { width: 33px; display: flex; align-items: center; justify-content: center; border-left: 1px solid #dadce0; }
.plus { width: 33px; align-items: center; justify-content: center; }
.actions { position: absolute; left: 1695px; display: flex; align-items: center; height: 32px; width: 140px; }
.promql { margin-left: 8px; font-size: 13px; font-weight: 500; }
.act-copy { margin-left: 15px; }
.act-del { margin-left: 12px; }
.drag-handle {
  position: absolute;
  left: 917px;
  top: 216px;
  width: 22px;
  height: 3px;
  border-radius: 1px;
  background: #9aa0a6;
}

/* chart row */
.work { flex: 1; min-height: 0; display: flex; }
.chart { position: relative; flex: 1; min-width: 0; }
.tabs {
  position: absolute;
  left: 12px;
  top: 8px;
  display: flex;
  height: 26px;
  background: #fff;
  border-radius: 3px;
  box-shadow: 0 0 0 1px #dadce0;
  color: #3367d6;
  font-size: 12px;
  font-weight: 500;
}
.tab { display: flex; align-items: center; justify-content: center; width: 51px; border-left: 1px solid #dadce0; }
.tab:nth-child(2) { width: 55px; }
.tab-on { width: 60px; color: #3367d6; background: #e8f0fe; border: 1px solid #3367d6; border-radius: 3px 0 0 3px; }
.plot { display: block; width: 100%; height: 100%; font-family: Roboto, sans-serif; }
.grid path { fill: none; stroke: #e0e0e0; stroke-width: 1; }
.ticks path { fill: none; stroke: #80868b; stroke-width: 1; }
.area { fill: #a8c8f6; }
.baseline { fill: none; stroke: #80868b; stroke-width: 1.5; }
.series { fill: none; stroke: #2a73de; stroke-width: 1.3; }
.end-dot { fill: #1a73e8; }
.y-labels text { font-size: 10px; fill: #5f6368; }
.x-labels text { font-size: 10px; fill: #5f6368; text-anchor: middle; }
.x-labels .utc { text-anchor: start; }
.legend-dot { fill: #1a73e8; }
.legend { font-size: 12px; fill: #202124; }

/* display panel */
.display { flex: none; width: 320px; border-left: 1px solid #e0e0e0; }
.display-head {
  height: 49px;
  padding-left: 16px;
  padding-right: 16px;
  display: flex;
  align-items: center;
  border-bottom: 1px solid #e0e0e0;
}
.display-title { margin-right: auto; font-size: 18px; }
.display-sep { width: 1px; height: 18px; margin: 0 8px 0 6px; background: #dadce0; }
.widget-wrap { height: 71px; padding: 19px 16px 0; border-bottom: 1px solid #e0e0e0; }
.widget {
  position: relative;
  height: 35px;
  width: 287px;
  display: flex;
  align-items: center;
  padding-left: 7px;
  border: 3px solid #3367d6;
  border-radius: 5px;
}
.widget-label {
  position: absolute;
  left: 4px;
  top: -9px;
  padding: 0 3px;
  background: #fff;
  color: #5f88e0;
  font-size: 12px;
  font-weight: 500;
  line-height: 14px;
}
.thumb { width: 28px; height: 21px; flex: none; }
.widget-text { margin-left: 12px; font-size: 13px; color: #3c4043; letter-spacing: .1px; }
.widget-caret { margin-left: auto; width: 10px; }
.widget-help { margin: 0 9px 0 21px; color: #000; }
.option {
  position: relative;
  height: 41px;
  padding: 0 16px;
  display: flex;
  align-items: center;
  gap: 10px;
  border-bottom: 1px solid #e0e0e0;
  font-size: 14px;
  font-weight: 500;
  letter-spacing: .45px;
  color: #202124;
}
.chev { margin-left: auto; margin-right: 0; color: #5f6368; }
.option-mark::before {
  content: "";
  position: absolute;
  left: 3px;
  top: 10px;
  width: 3px;
  height: 22px;
  background: #7b7f85;
  border-radius: 1px;
}

/* taskbar */
.taskbar {
  flex: none;
  height: 21px;
  margin-top: 4px;
  overflow: hidden;
  background: #1f1f1f;
}
.task-svg { display: block; width: 1919px; height: 21px; font-family: "Open Sans", Roboto, sans-serif; }
.tb-text { font-size: 11.5px; fill: #eee; }
```
